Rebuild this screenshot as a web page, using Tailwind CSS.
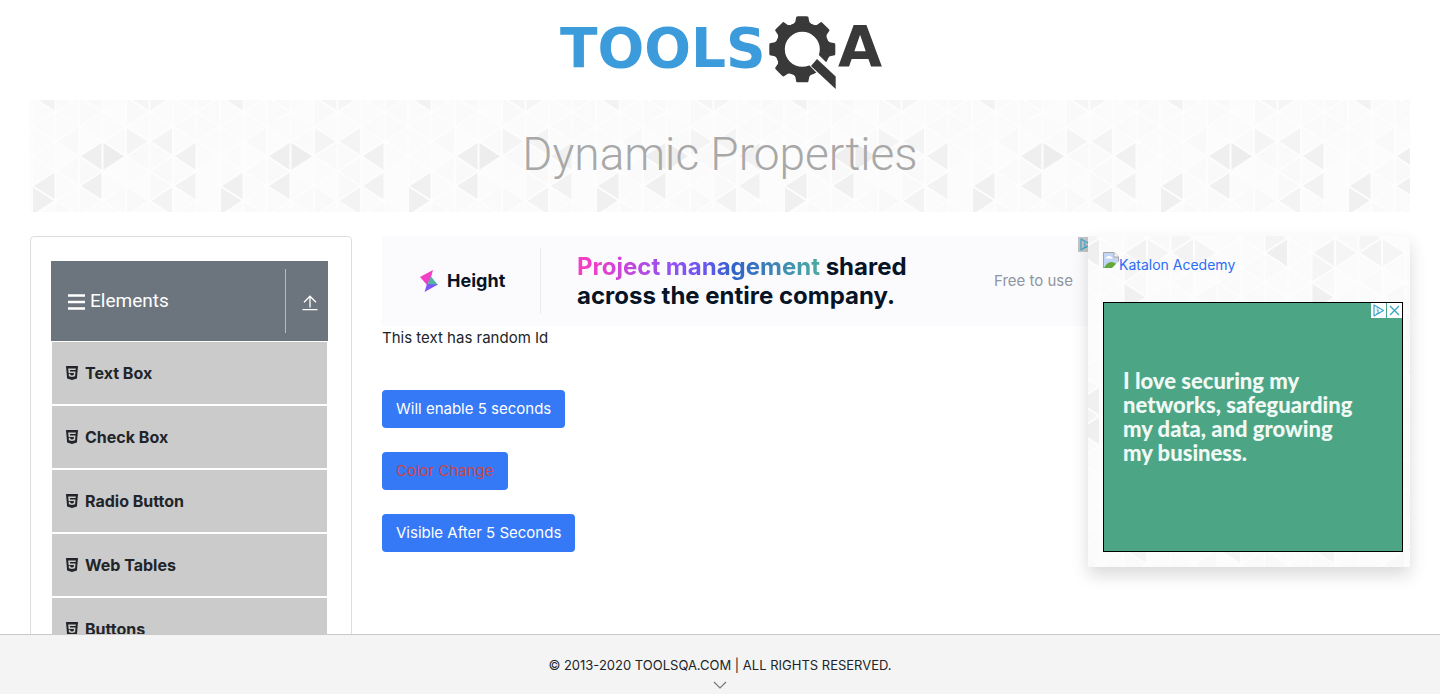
<!DOCTYPE html>
<html lang="en">
<head>
<meta charset="utf-8">
<title>ToolsQA - Dynamic Properties</title>
<script src="https://cdn.jsdelivr.net/npm/@tailwindcss/browser@4"></script>
</head>
<body class="flex h-screen flex-col overflow-hidden bg-white font-['Inter','Liberation_Sans',sans-serif] text-base text-[#212529]">

<svg width="0" height="0" class="absolute" aria-hidden="true">
  <defs>
    <symbol id="html5" viewBox="0 0 384 512"><path fill="currentColor" fill-rule="evenodd" d="M0 32l35 403 157 45 157-45 35-403zm308 127H124l4 50h176l-14 149-98 27-98-27-7-77h48l4 39 53 14 54-14 6-62H84L70 110h243z"/></symbol>
    <symbol id="adchoices" viewBox="0 0 15 15"><path d="M3 2v11L12.500 7.500z" fill="none" stroke="#3aa6cc" stroke-width="1.200" stroke-linejoin="round"/><path d="M5.700 5h1.600M5.500 7h1.500v3.300M5.500 10.500h3" fill="none" stroke="#3aa6cc" stroke-width="1.100"/></symbol>
  </defs>
</svg>

<header class="flex h-[100px] shrink-0 justify-center">
  <a href="#" aria-label="ToolsQA home" class="block">
    <svg width="340" height="100" viewBox="550 0 340 100">
      <text x="560" y="67" font-family="DejaVu Sans" font-weight="700" font-size="55" fill="#3c9cdb">TOOLS</text>
      <g fill="#393939">
        <g transform="translate(802.300 49.300)">
          <circle r="22.300" fill="none" stroke="#393939" stroke-width="9.600"/>
          <g>
            <path id="tooth" d="M-9-25l2-2.500 1-5Q-5.500-33 -4-33H4Q5.500-33 6-32.500l1 5 2 2.500z"/>
            <use href="#tooth" transform="rotate(45)"/><use href="#tooth" transform="rotate(90)"/><use href="#tooth" transform="rotate(180)"/><use href="#tooth" transform="rotate(225)"/><use href="#tooth" transform="rotate(270)"/><use href="#tooth" transform="rotate(315)"/>
          </g>
        </g>
        <path d="M808 64l9-11 22 21v22z" fill="#fff"/>
        <path d="M819 55l7 7 5-9-9-4z"/>
        <path d="M811 66l6-7 18.700 17.500v12.500z"/>
        <text x="838" y="67" font-family="DejaVu Sans" font-weight="700" font-size="57">A</text>
      </g>
    </svg>
  </a>
</header>

<main class="min-h-0 flex-1 overflow-hidden px-[30px]">
  <div class="relative h-28 overflow-hidden bg-[#fdfdfd]">
    <svg class="absolute inset-0 size-full" aria-hidden="true"><defs><pattern id="p1" width="188" height="178" x="2" y="-3" patternUnits="userSpaceOnUse"></pattern></defs><rect width="100%" height="100%" fill="url(#p1)"/></svg>
    <h1 class="relative pt-[18px] text-center font-['Roboto','Inter',sans-serif] text-[46px] leading-[72px] font-[350] text-[#a8a8a8]">Dynamic Properties</h1>
  </div>

  <div class="mt-6 grid grid-cols-[minmax(0,322fr)_minmax(0,676fr)_minmax(0,322fr)] items-start gap-x-[30px]">
    <nav class="rounded border border-[#dedede] pt-6 pr-[23px] pl-5" aria-label="Sections">
      <button class="flex h-20 w-full items-center bg-[#6c757d] pl-4 text-left text-white">
        <svg class="mr-1 size-[19px]" viewBox="0 0 19 19" aria-hidden="true"><path d="M1 3.500h17M1 10h17M1 16.500h17" stroke="#fff" stroke-width="2.600"/></svg>
        <span class="flex-1 font-['Roboto','Inter',sans-serif] text-[19px]">Elements</span>
        <span class="h-16 border-l border-[#b9b9b9]"></span>
        <svg class="mr-[10px] ml-4 size-4 translate-y-[2px]" viewBox="0 0 16 16" aria-hidden="true"><path d="M.500 14.700h15M8 12.500V1.500M2 7.200L8 1.200l6 6" fill="none" stroke="#fff" stroke-width="1.300"/></svg>
      </button>
      <ul class="mx-px mt-px text-base font-bold">
        <li class="mb-[2px]"><a href="#" class="flex h-[62px] items-center gap-[7px] bg-[#cbcbcb] pl-[14px]"><svg class="h-4 w-3"><use href="#html5"/></svg>Text Box</a></li>
        <li class="mb-[2px]"><a href="#" class="flex h-[62px] items-center gap-[7px] bg-[#cbcbcb] pl-[14px]"><svg class="h-4 w-3"><use href="#html5"/></svg>Check Box</a></li>
        <li class="mb-[2px]"><a href="#" class="flex h-[62px] items-center gap-[7px] bg-[#cbcbcb] pl-[14px]"><svg class="h-4 w-3"><use href="#html5"/></svg>Radio Button</a></li>
        <li class="mb-[2px]"><a href="#" class="flex h-[62px] items-center gap-[7px] bg-[#cbcbcb] pl-[14px]"><svg class="h-4 w-3"><use href="#html5"/></svg>Web Tables</a></li>
        <li class="mb-[2px]"><a href="#" class="flex h-[62px] items-center gap-[7px] bg-[#cbcbcb] pl-[14px]"><svg class="h-4 w-3"><use href="#html5"/></svg>Buttons</a></li>
      </ul>
    </nav>

    <section>
      <div class="relative flex h-[90px] w-[728px] items-center bg-[#fbfbfe]">
        <div class="flex w-[158px] items-center gap-2 self-center pl-[37px] font-bold text-[#071426]">
          <svg width="20" height="24" viewBox="0 0 20 24" aria-hidden="true"><path d="M14 1L1 8l7 8 3-4.500z" fill="#f23fc5"/><path d="M12 7.500L8 16h11z" fill="#4fb6a5"/><path d="M8 15l-2.500 8L19 15.500z" fill="#8055fa"/></svg>
          <span class="text-lg">Height</span>
        </div>
        <div class="h-[66px] w-[37px] border-l border-[#ebebef]"></div>
        <p class="w-[417px] text-2xl leading-[29px] font-bold text-[#071426]"><span class="bg-[linear-gradient(90deg,#f23fc5_5%,#8a52f8_42%,#6a56f0_52%,#2f63c9_65%,#4aa8a0_98%)] bg-clip-text text-transparent">Project management</span> shared<br>across the entire company.</p>
        <p class="text-[15px] text-[#8e959f]">Free to use</p>
        <div class="absolute top-px left-[696px] h-[15px] w-8 bg-[#c4c4c6]"><svg class="size-[15px]"><use href="#adchoices"/></svg></div>
      </div>
      <p class="text-[15px] leading-6">This text has random Id</p>
      <div class="mt-10 flex flex-col items-start gap-6 text-[15px] text-white">
        <button class="h-[38px] rounded bg-[#3579f6] px-[14px]">Will enable 5 seconds</button>
        <button class="h-[38px] rounded bg-[#3579f6] px-[14px] text-[#cb444a]">Color Change</button>
        <button class="h-[38px] rounded bg-[#3579f6] px-[14px]">Visible After 5 Seconds</button>
      </div>
    </section>

    <aside class="relative bg-[#fdfdfd] p-[15px] shadow-[0_8px_16px_rgba(0,0,0,0.15)]">
      <svg class="absolute inset-0 size-full" aria-hidden="true"><defs><pattern id="p2" width="188" height="178" x="12" y="2" patternUnits="userSpaceOnUse"></pattern></defs><rect width="100%" height="100%" fill="url(#p2)"/></svg>
      <a href="#" class="relative flex h-[51px] items-start text-sm text-[#2a6df5]">
        <svg class="mt-px size-4" viewBox="0 0 16 16" aria-hidden="true"><path d="M.500.500H11l4.500 4.500V16H.500z" fill="#c3d5f5" stroke="#a5a5a5"/><path d="M11 .500V5h4.500" fill="#fff" stroke="#a5a5a5"/><path d="M2.500 6.500q0-2 2-2 1.500-1.500 3 0 2 0 2 2z" fill="#fff"/><path d="M1 16q3-6 7-6 4 0 6 3v3z" fill="#65a83c"/><path d="M9 16l7-7v7z" fill="#fff"/></svg>
        <span class="pt-1">Katalon Acedemy</span>
      </a>
      <div class="relative h-[250px] w-[300px] border border-black bg-[#4ca685]">
        <p class="px-[19px] pt-[66px] font-['Lato','Open_Sans',sans-serif] text-[22px] leading-6 font-black text-[#f0f9f5]">I love securing my<br>networks, safeguarding<br>my data, and growing<br>my business.</p>
        <div class="absolute top-0 right-0 flex gap-px">
          <button aria-label="AdChoices" class="size-[15px] bg-white"><svg class="size-[15px]"><use href="#adchoices"/></svg></button>
          <button aria-label="Close ad" class="size-[15px] bg-white"><svg class="size-[15px]" viewBox="0 0 15 15"><path d="M3 3l9 9M12 3l-9 9" stroke="#3aa6cc" stroke-width="1.400"/></svg></button>
        </div>
      </div>
    </aside>
  </div>
</main>

<footer class="z-10 h-[60px] shrink-0 border-t border-[#c9c9c9] bg-[#f4f4f4] pt-5 text-center">
  <p class="text-[13px] leading-5">© 2013-2020 TOOLSQA.COM | ALL RIGHTS RESERVED.</p>
  <svg class="mx-auto mt-[6px]" width="14" height="9" viewBox="0 0 14 9" aria-hidden="true"><path d="M1 1l6 6 6-6" fill="none" stroke="#777" stroke-width="1.200"/></svg>
</footer>

<script>
// Triangle mosaic: each cell is column, half-row of its centre, and shade.
const W = 23.5, S = 178 / 6;
function mosaic(id, shades) {
  const pale = ['#fbfbfb', '#f9f9f9', '#fcfcfc', '#fafafa', '#fbfbfb'];
  let out = '';
  for (let c = 0; c < 8; c++) for (let h = 0; h <= 12; h++) {
    const left = (c + h) % 2 === 0;
    const x = c * W, y = h * S / 2, k = c + ',' + (h % 12);
    const fill = shades[k] || pale[(c * 3 + (h % 12) * 5 + c * h % 12) % 5];
    const a = S / 2 - 1.5;
    out += left ? `<path fill="${fill}" d="M${x + 2} ${y}L${x + W - 1} ${y - a}V${y + a}z"/>`
                : `<path fill="${fill}" d="M${x + 1} ${y - a}L${x + W - 2} ${y}L${x + 1} ${y + a}z"/>`;
  }
  document.getElementById(id).innerHTML = out;
}
mosaic('p1', {'0,0':'#f2f2f2','4,0':'#f5f5f5','5,0':'#f5f5f5','2,4':'#efefef','3,4':'#ededed','4,3':'#f4f4f4','5,3':'#f4f4f4','6,4':'#f1f1f1','0,6':'#f0f0f0','0,7':'#f0f0f0','2,6':'#f0f0f0','6,6':'#f2f2f2','5,7':'#f3f3f3'});
mosaic('p2', {'1,1':'#f2f2f2','2,1':'#f5f5f5','3,0':'#f5f5f5','1,2':'#f5f5f5','7,1':'#efefef','3,1':'#f3f3f3','4,1':'#f5f5f5','1,4':'#f0f0f0','7,0':'#f4f4f4','7,11':'#f0f0f0','5,9':'#f4f4f4','1,9':'#f5f5f5'});
</script>
</body>
</html>
